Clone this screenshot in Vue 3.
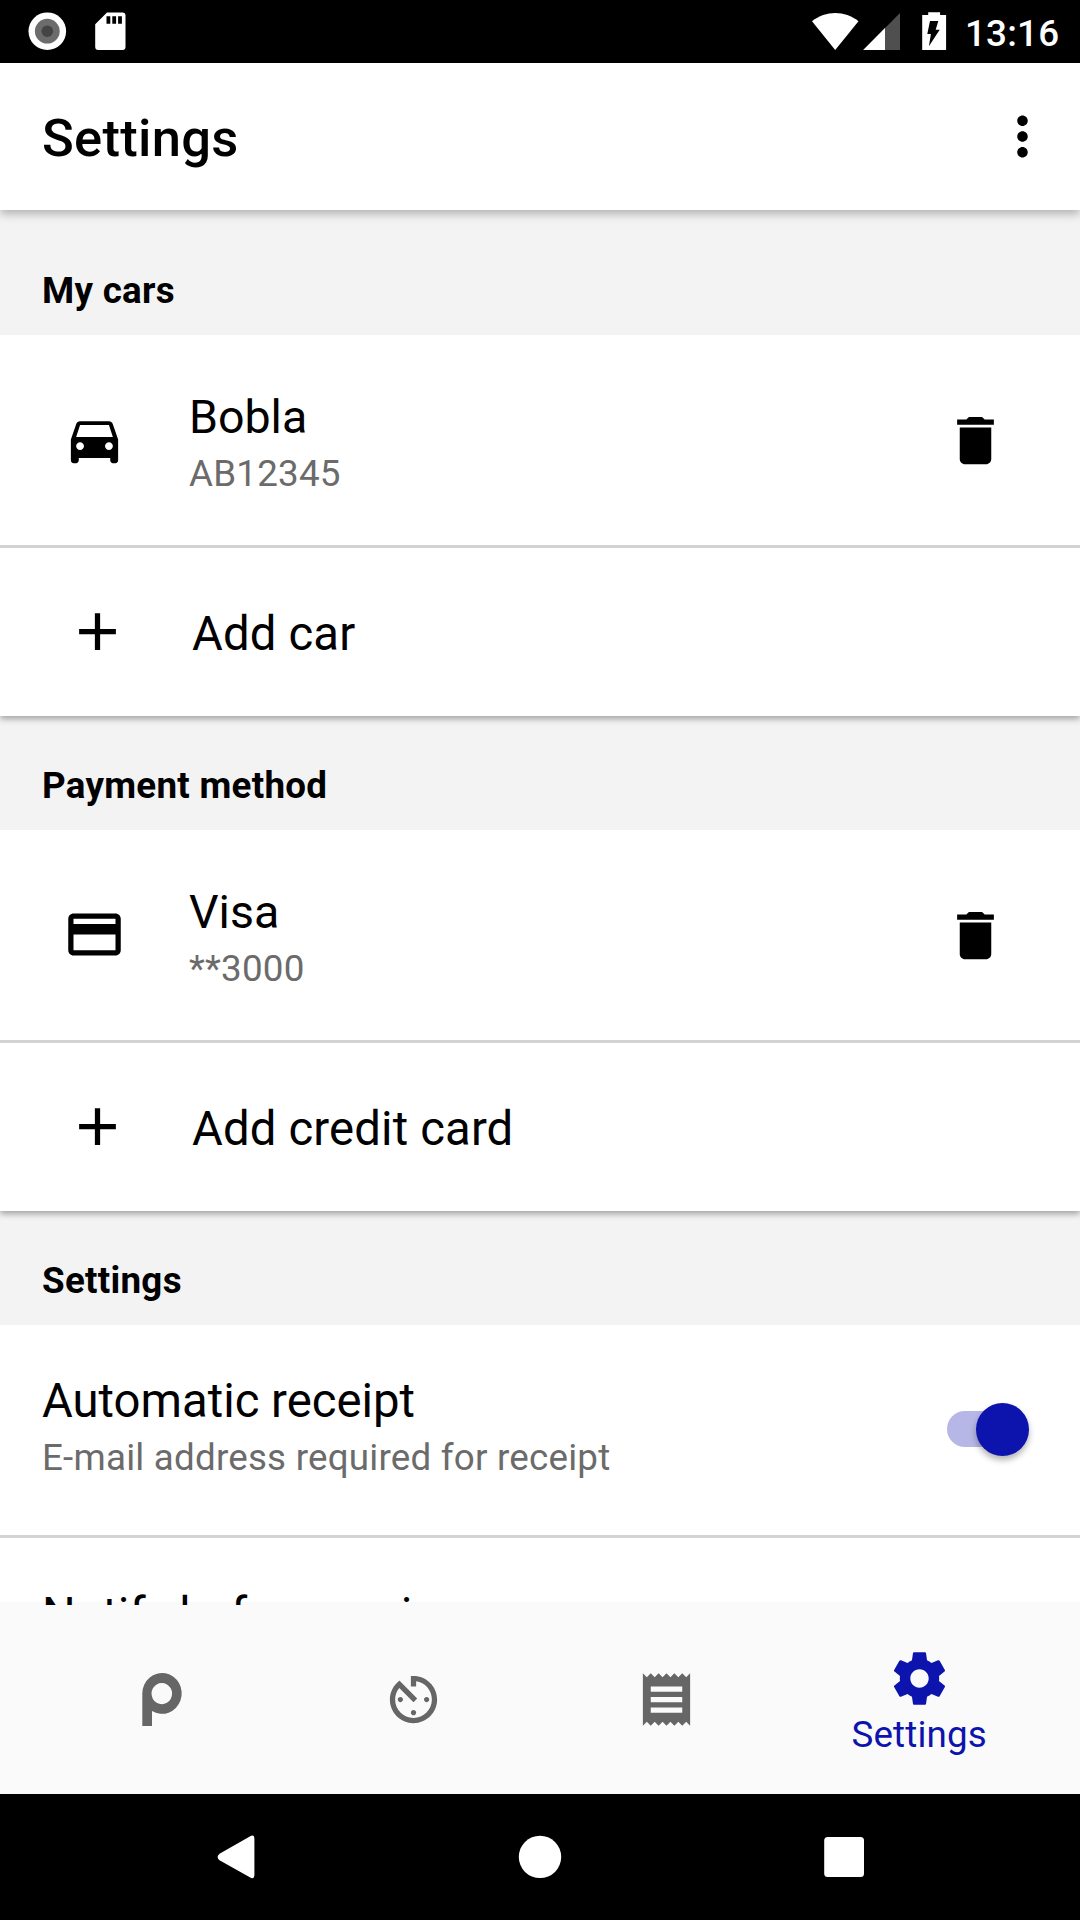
<script setup>
const icons = {
  car: 'M18.92 6.01C18.72 5.42 18.16 5 17.5 5h-11c-.66 0-1.21.42-1.42 1.01L3 12v8c0 .55.45 1 1 1h1c.55 0 1-.45 1-1v-1h12v1c0 .55.45 1 1 1h1c.55 0 1-.45 1-1v-8l-2.08-5.99zM6.5 16c-.83 0-1.5-.67-1.5-1.5S5.67 13 6.5 13s1.5.67 1.5 1.5S7.33 16 6.5 16zm11 0c-.83 0-1.5-.67-1.5-1.5s.67-1.5 1.5-1.5 1.5.67 1.5 1.5-.67 1.5-1.5 1.5zM5 11l1.5-4.5h11L19 11H5z',
  card: 'M20 4H4c-1.11 0-1.99.89-1.99 2L2 18c0 1.11.89 2 2 2h16c1.11 0 2-.89 2-2V6c0-1.11-.89-2-2-2zm0 14H4v-6h16v6zm0-10H4V6h16v2z',
  trash: 'M6 19c0 1.1.9 2 2 2h8c1.1 0 2-.9 2-2V7H6v12zM19 4h-3.5l-1-1h-5l-1 1H5v2h14V4z',
  plus: 'M19 13h-6v6h-2v-6H5v-2h6V5h2v6h6v2z',
  more: 'M12 8c1.1 0 2-.9 2-2s-.9-2-2-2-2 .9-2 2 .9 2 2 2zm0 2c-1.1 0-2 .9-2 2s.9 2 2 2 2-.9 2-2-.9-2-2-2zm0 6c-1.1 0-2 .9-2 2s.9 2 2 2 2-.9 2-2-.9-2-2-2z',
  timer: 'M11 17c0 .55.45 1 1 1s1-.45 1-1-.45-1-1-1-1 .45-1 1zm0-14v4h2V5.08c3.39.49 6 3.39 6 6.92 0 3.87-3.13 7-7 7s-7-3.13-7-7c0-1.68.59-3.22 1.58-4.42L12 13l1.41-1.41-6.8-6.8v.02C4.42 6.45 3 9.05 3 12c0 4.97 4.02 9 9 9 4.97 0 9-4.03 9-9s-4.03-9-9-9h-1zm7 9c0-.55-.45-1-1-1s-1 .45-1 1 .45 1 1 1 1-.45 1-1zM6 12c0 .55.45 1 1 1s1-.45 1-1-.45-1-1-1-1 .45-1 1z',
  receipt: 'M18 17H6v-2h12v2zm0-4H6v-2h12v2zm0-4H6V7h12v2zM3 22l1.5-1.5L6 22l1.5-1.5L9 22l1.5-1.5L12 22l1.5-1.5L15 22l1.5-1.5L18 22l1.5-1.5L21 22V2l-1.5 1.5L18 2l-1.5 1.5L15 2l-1.5 1.5L12 2l-1.5 1.5L9 2 7.5 3.5 6 2 4.5 3.5 3 2v20z',
  gear: 'M19.43 12.98c.04-.32.07-.64.07-.98s-.03-.66-.07-.98l2.11-1.65c.19-.15.24-.42.12-.64l-2-3.46c-.12-.22-.39-.3-.61-.22l-2.49 1c-.52-.4-1.08-.73-1.69-.98l-.38-2.65C14.46 2.18 14.25 2 14 2h-4c-.25 0-.46.18-.49.42l-.38 2.65c-.61.25-1.17.59-1.69.98l-2.49-1c-.23-.09-.49 0-.61.22l-2 3.46c-.13.22-.07.49.12.64l2.11 1.65c-.04.32-.07.65-.07.98s.03.66.07.98l-2.11 1.65c-.19.15-.24.42-.12.64l2 3.46c.12.22.39.3.61.22l2.49-1c.52.4 1.08.73 1.69.98l.38 2.65c.03.24.24.42.49.42h4c.25 0 .46-.18.49-.42l.38-2.65c.61-.25 1.17-.59 1.69-.98l2.49 1c.23.09.49 0 .61-.22l2-3.46c.12-.22.07-.49-.12-.64l-2.11-1.65zM12 15.5c-1.93 0-3.5-1.57-3.5-3.5s1.57-3.5 3.5-3.5 3.5 1.57 3.5 3.5-1.57 3.5-3.5 3.5z',
}

const groups = [
  { heading: 'My cars', icon: 'car', name: 'Bobla', detail: 'AB12345', add: 'Add car' },
  { heading: 'Payment method', icon: 'card', name: 'Visa', detail: '**3000', add: 'Add credit card' },
]
</script>

<template>
  <div class="screen">
    <header class="status">
      <svg class="status-left" width="140" height="63" viewBox="0 0 140 63">
        <circle cx="47.3" cy="31.2" r="18.8" fill="#fff" />
        <circle cx="47.3" cy="31.2" r="12.4" fill="#6c6c6c" />
        <circle cx="47.3" cy="31.2" r="5.8" fill="#444" />
        <path d="M107 12.5h15.500a3 3 0 0 1 3 3v31.500a3 3 0 0 1-3 3h-24.300a3 3 0 0 1-3-3V24.300z" fill="#fff" />
        <path d="M106.500 16.300h3.800v7.500h-3.800zM112.300 16.300h3.800v7.500h-3.800zM118.100 16.300h3.800v7.500h-3.800z" fill="#000" />
      </svg>
      <div class="status-right">
        <svg width="136" height="63" viewBox="0 0 136 63">
          <path d="M0 21.300C13.500 10.300 33 10.300 46.500 21.300L23.200 50z" fill="#fff" />
          <path d="M51.200 50L88 13v37z" fill="#4f4f4f" />
          <path d="M51.200 50L73 28.100V50z" fill="#fff" />
          <path d="M110.200 15h6v-2.700h11.900V15h6v35h-23.900z" fill="#fff" />
          <path d="M118 21h8.300l-2.600 8.800h4l-10.800 16.500 2-12.300h-3.600z" fill="#000" />
        </svg>
        <span class="clock">13:16</span>
      </div>
    </header>

    <header class="appbar">
      <h1>Settings</h1>
      <svg class="icon" viewBox="0 0 24 24"><path :d="icons.more" /></svg>
    </header>

    <main class="content">
      <section v-for="(g, i) in groups" :key="g.heading" class="group">
        <h2 :class="{ first: i === 0 }">{{ g.heading }}</h2>
        <div class="panel">
          <div class="row item">
            <svg class="icon lead" viewBox="0 0 24 24"><path :d="icons[g.icon]" fill-rule="evenodd" /></svg>
            <div class="labels">
              <div class="name">{{ g.name }}</div>
              <div class="detail">{{ g.detail }}</div>
            </div>
            <svg class="icon" viewBox="0 0 24 24"><path :d="icons.trash" /></svg>
          </div>
          <div class="row add">
            <svg class="icon lead" viewBox="0 0 24 24"><path :d="icons.plus" /></svg>
            <div class="name">{{ g.add }}</div>
          </div>
        </div>
      </section>

      <section class="group">
        <h2>Settings</h2>
        <div class="panel">
          <div class="row item pref">
            <div class="labels">
              <div class="name">Automatic receipt</div>
              <div class="detail">E-mail address required for receipt</div>
            </div>
            <div class="switch"><span class="knob"></span></div>
          </div>
          <div class="row item pref single">
            <div class="labels">
              <div class="name">Notify before expiry</div>
            </div>
          </div>
        </div>
      </section>
    </main>

    <nav class="tabs">
      <div class="tab">
        <svg class="icon" viewBox="0 0 63 63">
          <path fill-rule="evenodd" d="M13.300 58V25.300a19.700 20.400 0 1 1 9.700 17.700V58zM32.800 15a10.300 10.600 0 1 0 .01 0z" />
        </svg>
      </div>
      <div class="tab"><svg class="icon" viewBox="0 0 24 24"><path :d="icons.timer" /></svg></div>
      <div class="tab"><svg class="icon" viewBox="0 0 24 24"><path :d="icons.receipt" /></svg></div>
      <div class="tab active">
        <svg class="icon" viewBox="0 0 24 24"><path :d="icons.gear" /></svg>
        <span>Settings</span>
      </div>
    </nav>

    <footer class="system">
      <svg width="1080" height="126" viewBox="0 0 1080 126" fill="#fff">
        <path d="M249.800 42.500Q254.400 39.800 254.400 45V80.500Q254.400 86 249.800 83.300L219.500 66.300Q215.700 63 219.500 59.700z" />
        <circle cx="540" cy="62.900" r="21.200" />
        <rect x="824.200" y="43" width="39.800" height="40" rx="3.500" />
      </svg>
    </footer>
  </div>
</template>

<style>
body {
  margin: 0;
  background: #000;
}
</style>

<style scoped>
.screen {
  width: 1080px;
  height: 1920px;
  display: flex;
  flex-direction: column;
  overflow: hidden;
  background: #f3f3f3;
  color: #000;
  font-family: Roboto, sans-serif;
}

.icon {
  width: 63px;
  height: 63px;
  flex: none;
  display: block;
  fill: currentColor;
}

.lead {
  margin-bottom: 2px;
}

.status {
  height: 63px;
  flex: none;
  display: flex;
  justify-content: space-between;
  background: #000;
  color: #fff;
}

.status svg {
  display: block;
}

.status-right {
  display: flex;
  margin-right: 21px;
}

.clock {
  margin-left: 17px;
  width: 94px;
  font-size: 36.75px;
  font-weight: 500;
  letter-spacing: 0.2px;
  line-height: 67px;
  white-space: nowrap;
}

.appbar {
  height: 147px;
  flex: none;
  display: flex;
  align-items: center;
  justify-content: space-between;
  box-sizing: border-box;
  padding: 0 26px 0 42px;
  background: #fff;
  box-shadow: 0 4px 9px rgba(0, 0, 0, 0.27);
  position: relative;
  z-index: 2;
}

h1 {
  margin: 3px 0 0;
  font-size: 52.5px;
  font-weight: 500;
  letter-spacing: 0.3px;
  line-height: 62px;
}

.content {
  flex: 1;
  min-height: 0;
  overflow: hidden;
}

h2 {
  margin: 0;
  box-sizing: border-box;
  height: 114px;
  padding: 48px 42px 0;
  font-size: 36.75px;
  font-weight: 700;
  letter-spacing: 0.28px;
  line-height: 43px;
}

h2.first {
  height: 125px;
  padding-top: 59px;
}

.panel {
  background: #fff;
  box-shadow: 0 3px 6px rgba(0, 0, 0, 0.33);
  clip-path: inset(0 0 -14px 0);
}

.row {
  display: flex;
  align-items: center;
  box-sizing: border-box;
}

.item {
  height: 213px;
  padding: 0 73px 0 63px;
  border-bottom: 3px solid #d3d3d3;
}

.item .labels {
  flex: 1;
  margin: 7px 0 0 63px;
}

.name {
  font-size: 47.25px;
  line-height: 56px;
  white-space: nowrap;
}

.item:not(.pref) .name {
  font-size: 46.5px;
}

.detail {
  margin-top: 4px;
  font-size: 36.75px;
  letter-spacing: 0.22px;
  line-height: 50px;
  color: #6b6b6b;
}

.add {
  height: 168px;
  padding-left: 66px;
}

.add .name {
  margin: 3px 0 0 63px;
  letter-spacing: 0.15px;
}

.item.pref {
  align-items: flex-start;
  padding: 0 50px 0 42px;
}

.pref .labels {
  margin: 48px 0 0;
}

.single .labels {
  margin-top: 49px;
  letter-spacing: -0.1px;
}

.switch {
  width: 72px;
  height: 36px;
  margin: 86px 11px 0 0;
  border-radius: 18px;
  background: #b7b7e7;
  display: flex;
  align-items: center;
  justify-content: flex-end;
}

.knob {
  width: 53px;
  height: 53px;
  flex: none;
  margin-right: -10px;
  border-radius: 50%;
  background: #0d14ae;
  box-shadow: 0 4px 6px rgba(0, 0, 0, 0.3);
}

.tabs {
  height: 189px;
  flex: none;
  display: flex;
  box-sizing: border-box;
  padding: 0 34.500px;
  background: #fafafa;
  box-shadow: 0 -3px 0 rgba(0, 0, 0, 0.025);
  position: relative;
  color: #666;
}

.tab {
  flex: 1;
  display: flex;
  flex-direction: column;
  align-items: center;
  justify-content: center;
}

.tab.active {
  justify-content: flex-start;
  padding-top: 42px;
  color: #0d14ae;
}

.active span {
  margin-top: 3px;
  font-size: 36.75px;
  letter-spacing: 0.15px;
  line-height: 44px;
}

.system {
  height: 126px;
  flex: none;
  background: #000;
}

.system svg {
  display: block;
}
</style>
